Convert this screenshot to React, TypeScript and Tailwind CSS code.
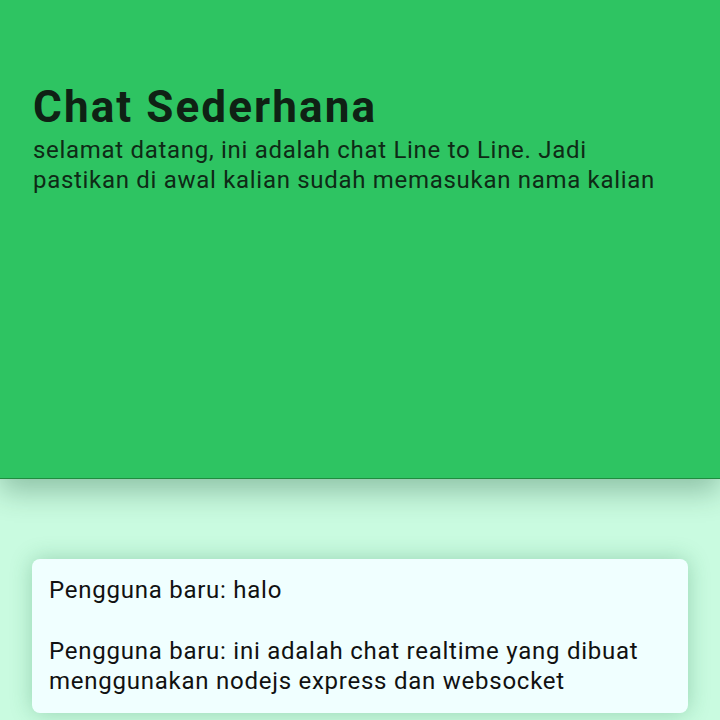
import React from 'react';

const messages = [
  'Pengguna baru: halo',
  'Pengguna baru: ini adalah chat realtime yang dibuat menggunakan nodejs express dan websocket',
];

const App: React.FC = () => {
  return (
    <div className="min-h-screen h-[720px] overflow-hidden bg-[#c9fbe0] font-['Roboto',sans-serif]">
      {/* Header */}
      <header className="relative z-10 h-[479px] bg-[#2ec462] border-b border-[#1f8c3f] px-[33px] pt-[82px] shadow-[0_12px_28px_rgba(0,60,30,0.3)]">
        <h1 className="text-[44px] leading-[50px] font-bold tracking-[2.1px] text-[#0f2114]">Chat Sederhana</h1>
        <p className="mt-[3px] text-[24px] leading-[30px] tracking-[0.7px] text-[#0e2a16] max-w-[640px]">
          selamat datang, ini adalah chat Line to Line. Jadi pastikan di awal kalian sudah memasukan nama kalian
        </p>
      </header>

      {/* Messages */}
      <main className="px-[32px] pt-[80px]">
        <div className="bg-[#f0ffff] rounded-[8px] px-[17px] pt-[16px] pb-[17px] shadow-[0_0_22px_rgba(20,110,60,0.28)]">
          {messages.map((m, i) => (
            <p key={i} className={`text-[24px] leading-[30px] tracking-[0.75px] text-[#111] ${i > 0 ? 'mt-[31px]' : ''}`}>
              {m}
            </p>
          ))}
        </div>
      </main>
    </div>
  );
};

export default App;
